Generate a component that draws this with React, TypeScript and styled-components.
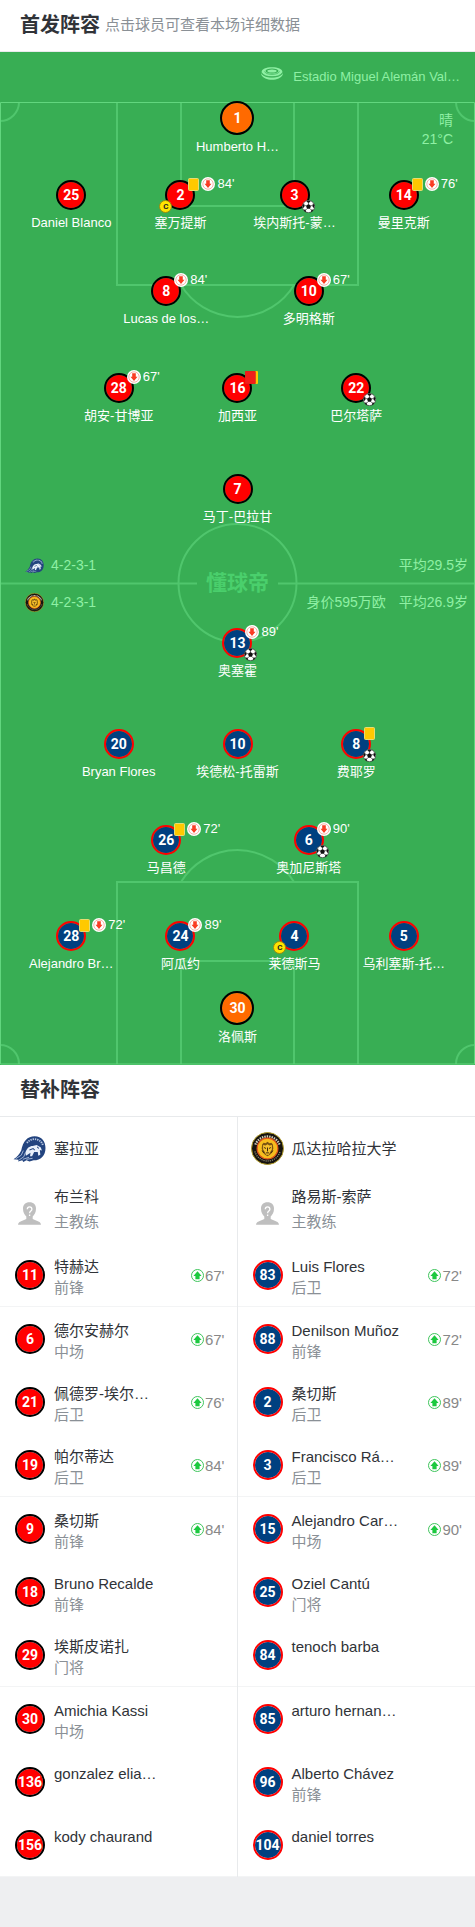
import React from 'react';
import styled, { createGlobalStyle } from 'styled-components';

const Global = createGlobalStyle`
  *, *::before, *::after { box-sizing: border-box; }
  body {
    margin: 0;
    background: #eeeff1;
    color: #303338;
    font-family: "Liberation Sans", "Noto Sans CJK SC", sans-serif;
  }
  h2, p, ul { margin: 0; padding: 0; }
  ul { list-style: none; }
  svg { flex: none; }
`;

type Side = 'home' | 'away' | 'keeper';

interface Player {
  no: number;
  name: string;
  off?: string;
  yellow?: boolean;
  red?: boolean;
  goal?: boolean;
  captain?: boolean;
}

interface Sub {
  no: number;
  name: string;
  role?: string;
  on?: string;
}

const kit: Record<Side, { fill: string; edge: string }> = {
  home: { fill: '#ff0000', edge: '#000000' },
  away: { fill: '#004080', edge: '#ff0000' },
  keeper: { fill: '#ff6a00', edge: '#000000' },
};

const homeLines: Player[][] = [
  [
    { no: 25, name: 'Daniel Blanco' },
    { no: 2, name: '塞万提斯', yellow: true, off: "84'", captain: true },
    { no: 3, name: '埃内斯托-蒙…', goal: true },
    { no: 14, name: '曼里克斯', yellow: true, off: "76'" },
  ],
  [
    { no: 8, name: 'Lucas de los…', off: "84'" },
    { no: 10, name: '多明格斯', off: "67'" },
  ],
  [
    { no: 28, name: '胡安-甘博亚', off: "67'" },
    { no: 16, name: '加西亚', red: true },
    { no: 22, name: '巴尔塔萨', goal: true },
  ],
  [{ no: 7, name: '马丁-巴拉甘' }],
];

const awayLines: Player[][] = [
  [{ no: 13, name: '奥塞霍', off: "89'", goal: true }],
  [
    { no: 20, name: 'Bryan Flores' },
    { no: 10, name: '埃德松-托雷斯' },
    { no: 8, name: '费耶罗', yellow: true, goal: true },
  ],
  [
    { no: 26, name: '马昌德', yellow: true, off: "72'" },
    { no: 6, name: '奥加尼斯塔', off: "90'", goal: true },
  ],
  [
    { no: 28, name: 'Alejandro Br…', yellow: true, off: "72'" },
    { no: 24, name: '阿瓜约', off: "89'" },
    { no: 4, name: '莱德斯马', captain: true },
    { no: 5, name: '乌利塞斯-托…' },
  ],
];

const homeSubs: Sub[] = [
  { no: 11, name: '特赫达', role: '前锋', on: "67'" },
  { no: 6, name: '德尔安赫尔', role: '中场', on: "67'" },
  { no: 21, name: '佩德罗-埃尔…', role: '后卫', on: "76'" },
  { no: 19, name: '帕尔蒂达', role: '后卫', on: "84'" },
  { no: 9, name: '桑切斯', role: '前锋', on: "84'" },
  { no: 18, name: 'Bruno Recalde', role: '前锋' },
  { no: 29, name: '埃斯皮诺扎', role: '门将' },
  { no: 30, name: 'Amichia Kassi', role: '中场' },
  { no: 136, name: 'gonzalez elia…' },
  { no: 156, name: 'kody chaurand' },
];

const awaySubs: Sub[] = [
  { no: 83, name: 'Luis Flores', role: '后卫', on: "72'" },
  { no: 88, name: 'Denilson Muñoz', role: '前锋', on: "72'" },
  { no: 2, name: '桑切斯', role: '后卫', on: "89'" },
  { no: 3, name: 'Francisco Rá…', role: '后卫', on: "89'" },
  { no: 15, name: 'Alejandro Car…', role: '中场', on: "90'" },
  { no: 25, name: 'Oziel Cantú', role: '门将' },
  { no: 84, name: 'tenoch barba' },
  { no: 85, name: 'arturo hernan…' },
  { no: 96, name: 'Alberto Chávez', role: '前锋' },
  { no: 104, name: 'daniel torres' },
];

const columns: Record<number, string> = {
  1: '30%',
  2: '30% 30%',
  3: '25% 25% 25%',
  4: '22% 24% 24% 22%',
};

/* ---------- styled parts ---------- */

const SectionHead = styled.header`
  display: flex;
  align-items: center;
  gap: 5px;
  height: 52px;
  padding: 0 20px 2px;
  background: #fff;
  border-bottom: 1px solid #e8eaec;
`;

const Title = styled.h2`
  font-size: 20px;
  line-height: 28px;
  font-weight: 700;
`;

const Hint = styled.p`
  font-size: 15px;
  line-height: 20px;
  color: #8a9096;
`;

const Field = styled.section`
  position: relative;
  background: #38ae54;
  color: #8ff0a4;
`;

const StadiumBar = styled.div`
  display: flex;
  align-items: center;
  justify-content: flex-end;
  gap: 10px;
  height: 49px;
  padding-right: 15px;
  font-size: 13px;
  line-height: 18px;
  svg { margin-bottom: 6px; }
`;

const Pitch = styled.div`
  position: relative;
  padding-bottom: 19px;
`;

const Markings = styled.svg`
  position: absolute;
  top: 0;
  left: 0;
  width: 100%;
  height: 100%;
`;

const Weather = styled.p`
  position: absolute;
  top: 10px;
  right: 22px;
  font-size: 14px;
  line-height: 19px;
  text-align: right;
`;

const Line = styled.div<{ $count: number; $gap: number }>`
  position: relative;
  display: grid;
  grid-template-columns: ${(p) => columns[p.$count]};
  justify-content: center;
  justify-items: center;
  margin-top: ${(p) => p.$gap}px;
`;

const PlayerButton = styled.button`
  display: flex;
  flex-direction: column;
  align-items: center;
  padding: 0;
  border: 0;
  background: none;
  color: #fff;
  font: inherit;
  font-size: 13px;
  line-height: 18px;
  white-space: nowrap;
  cursor: pointer;
`;

const Shirt = styled.span<{ $side: Side }>`
  position: relative;
  flex: none;
  display: flex;
  align-items: center;
  justify-content: center;
  width: ${(p) => (p.$side === 'keeper' ? 34 : 30)}px;
  height: ${(p) => (p.$side === 'keeper' ? 34 : 30)}px;
  border: 2px solid ${(p) => kit[p.$side].edge};
  border-radius: 50%;
  background: ${(p) => kit[p.$side].fill} padding-box;
  color: #fff;
  font-family: Roboto, sans-serif;
  font-size: 14px;
  line-height: 16px;
  font-weight: 700;
`;

const PlayerName = styled.span<{ $side: Side }>`
  margin-top: ${(p) => (p.$side === 'keeper' ? 3 : 4)}px;
`;

const Events = styled.span`
  position: absolute;
  top: -5px;
  left: 21px;
  display: flex;
  align-items: center;
  gap: 2px;
  width: max-content;
  height: 14px;
  font-family: "Liberation Sans", sans-serif;
  font-size: 13px;
  font-weight: 400;
`;

const GoalSpot = styled.span`
  position: absolute;
  right: -7px;
  bottom: -5px;
  display: flex;
`;

const CaptainMark = styled.span`
  position: absolute;
  left: -8px;
  bottom: -5px;
  display: flex;
  align-items: center;
  justify-content: center;
  width: 13px;
  height: 13px;
  border: 1px solid #9a8a10;
  border-radius: 50%;
  background: #ffe400;
  color: #222;
  font-size: 8px;
  line-height: 11px;
`;

const TeamInfo = styled.div<{ $side: 'home' | 'away' }>`
  position: relative;
  display: flex;
  align-items: center;
  gap: 13px;
  height: 20px;
  margin-top: ${(p) => (p.$side === 'home' ? 29 : 17)}px;
  padding: 0 7px 0 25px;
  font-size: 14px;
  line-height: 20px;
`;

const Formation = styled.span`
  display: flex;
  align-items: center;
  gap: 7px;
  margin-right: auto;
`;

const Wordmark = styled.div`
  position: absolute;
  inset: 0;
  display: flex;
  align-items: center;
  justify-content: center;
  color: #4acf6c;
  font-size: 21px;
  line-height: 28px;
  font-weight: 700;
`;

const Bench = styled.section`
  display: grid;
  grid-template-columns: 1fr 1fr;
  background: #fff;
`;

const BenchColumn = styled.div`
  min-width: 0;
  & + & { box-shadow: -1px 0 #e8eaec; }
`;

const TeamRow = styled.div`
  display: flex;
  align-items: center;
  gap: 8px;
  height: 62px;
  padding-left: 13px;
  font-size: 15px;
  line-height: 21px;
`;

const CoachRow = styled.div`
  display: flex;
  align-items: center;
  gap: 13px;
  height: 64px;
  padding: 0 0 5px 18px;
  font-size: 15px;
  line-height: 25px;
  svg { margin-top: 9px; }
`;

const SubRow = styled.li`
  display: flex;
  align-items: flex-start;
  gap: 9px;
  box-sizing: content-box;
  height: 50px;
  padding: 13px 13px 0 15px;
  font-size: 15px;
  line-height: 21px;
  &:nth-child(3n + 1) { border-bottom: 1px solid #f3f4f5; }
  ${Shirt} { margin-top: 4px; }
`;

const Who = styled.div`
  flex: 1;
  min-width: 0;
  white-space: nowrap;
`;

const Muted = styled.p`
  color: #8a9096;
`;

const Entered = styled.span`
  display: flex;
  align-items: center;
  gap: 1px;
  height: 38px;
  color: #888;
`;

/* ---------- drawings ---------- */

const PitchMarkings = () => (
  <Markings viewBox="0 0 475 964" preserveAspectRatio="none" fill="none" stroke="#50c66d" strokeWidth="2" aria-hidden="true">
    <path d="M117 1V184H358V1M181 1V105H294V1" />
    <path d="M181 184A66 66 0 0 0 294 184" />
    <path d="M117 963V781H358V963M181 963V860H294V963" />
    <path d="M181 781A66 66 0 0 1 294 781" />
    <path d="M0 482.500H197M278 482.500H475" />
    <ellipse cx="237.500" cy="482" rx="59" ry="59" />
    <path d="M19 1A19 19 0 0 1 0 20M456 1A19 19 0 0 0 475 20M19 963A19 19 0 0 0 0 944M456 963A19 19 0 0 1 475 944" />
    <path d="M.5 1.500H474.500V963H.5Z" stroke="#62d67e" strokeWidth="1" />
  </Markings>
);

const StadiumIcon = () => (
  <svg width="22" height="13" viewBox="0 0 22 13" aria-hidden="true">
    <path d="M0 5.500C1 9 5 10.500 11 10.500S21 9 22 5.500L21.600 8C20 11 16 12.800 11 12.800S2 11 .4 8Z" fill="#8ff0a4" />
    <path d="M11 .3C5 .3 .6 2.200.6 4.900S5 9.600 11 9.600 21.400 7.600 21.400 4.900 17 .3 11 .3Z" fill="#8ff0a4" />
    <ellipse cx="11" cy="4" rx="6.500" ry="2.400" fill="#38ae54" />
    <ellipse cx="11" cy="4" rx="4.600" ry="1.500" fill="#8ff0a4" />
    <path d="M.6 5.500C3 11.200 19 11.200 21.400 5.500M3.500 4.500C5 8.300 17 8.300 18.500 4.500" fill="none" stroke="#38ae54" strokeWidth=".7" />
  </svg>
);

const YellowCard = () => (
  <svg width="11" height="13" viewBox="0 0 11 13" role="img" aria-label="黄牌">
    <rect x=".5" y=".5" width="10" height="12" rx="1" fill="#ffc900" stroke="#e6dc72" />
  </svg>
);

const SecondYellow = () => (
  <svg width="13" height="13" viewBox="0 0 13 13" role="img" aria-label="两黄变红">
    <rect x="4" width="9" height="13" rx="1" fill="#ffc900" />
    <rect width="10.500" height="13" rx="1" fill="#f21d1a" stroke="#c62a1c" strokeWidth=".5" />
  </svg>
);

const OffIcon = () => (
  <svg width="14" height="14" viewBox="0 0 14 14" role="img" aria-label="换下">
    <circle cx="7" cy="7" r="7" fill="#fff" />
    <circle cx="7" cy="7" r="5.200" fill="none" stroke="#f2a093" strokeWidth=".8" />
    <path d="M5.200 3.300H8.800V6.800H10.500L7 11 3.500 6.800H5.200Z" fill="#fa3c23" />
  </svg>
);

const OnIcon = () => (
  <svg width="13" height="13" viewBox="0 0 13 13" role="img" aria-label="换上">
    <circle cx="6.500" cy="6.500" r="6" fill="#fff" stroke="#3fc45c" strokeWidth="1" />
    <path d="M4.400 10.200V6.900H2.400L6.500 2.300 10.600 6.900H8.600V10.200Z" fill="#1cc93f" />
  </svg>
);

const Ball = () => (
  <svg width="13" height="13" viewBox="0 0 26 26" role="img" aria-label="进球">
    <circle cx="13" cy="13" r="12.300" fill="#fff" stroke="#333" strokeWidth="1.400" />
    <path d="M13 8L18 11.500 16 17.300H10L8 11.500ZM13 1L17.500 3 13 5.800 8.500 3ZM24.800 10L24 16.500 20.700 12.500 21.700 7ZM1.200 10L2 16.500 5.300 12.500 4.300 7ZM17.500 24L19 19 23 19.500 20.500 23ZM8.500 24L7 19 3 19.500 5.500 23Z" fill="#111" />
    <path d="M13 8V5.500M18 11.500L21 11M16 17.300L18.500 20M10 17.300L7.500 20M8 11.500L5 11" stroke="#111" strokeWidth="1.200" />
  </svg>
);

const CelayaCrest = ({ size }: { size: number }) => (
  <svg width={size} height={size} viewBox="0 0 32 32" aria-hidden="true">
    <path d="M.5 26.500C4 24 6 22 8 18 9.500 9 14 4 21 4 28 4 31.500 9 31.500 15.500 31.500 23 27 27.500 20 27.500L16 28.500 13 27.500 10 29 9 27.500 5 28.500 5.500 27Z" fill="#23447f" />
    <path d="M13.500 10.500C16 7.300 20 6.300 23.500 7.300 26.500 8.300 28.500 10.500 29 13" fill="none" stroke="#b9c8e2" strokeWidth="1.800" strokeDasharray="1.300 .9" />
    <path d="M12 20C13.500 15.500 16 13.500 19 13.500L23 12.500 27 15 28 18 26 17.500 26.500 22 24.500 23 24 19.500 20.500 19.500 18.500 23.500 16.500 23.500 17 20 12.500 23Z" fill="#e9f0fa" />
    <path d="M2.500 26L8 22.500 10 18M6 27L10.500 24 12 20M9.500 26.500L15.500 24.500M13 26.500L19 25.500" fill="none" stroke="#a9bbd9" strokeWidth=".9" />
    <path d="M16 17.500L19.500 16 21 17.500M23.500 14.500L25 16" fill="none" stroke="#23447f" strokeWidth="1" />
  </svg>
);

const LeonesCrest = ({ size }: { size: number }) => (
  <svg width={size} height={size} viewBox="0 0 34 34" aria-hidden="true">
    <circle cx="17" cy="17" r="16.500" fill="#16130f" stroke="#b7a02a" strokeWidth="1" />
    <path d="M4.500 13A13.500 13.500 0 0 1 29.500 13" fill="none" stroke="#d8d2bd" strokeWidth="2.400" strokeDasharray="1.500 1" />
    <path d="M4 20A13.500 13.500 0 0 0 30 20" fill="none" stroke="#8d8672" strokeWidth="1.400" strokeDasharray="1.200 1" />
    <circle cx="17" cy="17" r="10.700" fill="#f6bd1e" stroke="#e4571d" strokeWidth="1.200" />
    <path d="M11.500 13L13 11 15 11.500 17 10 19 11.500 21 11 22.500 13 23 17 21.500 21.500 19.500 23.500 17 25 14.500 23.500 12.500 21.500 11 17Z" fill="#7a5312" />
    <path d="M12.500 13.500L15 14 17 12.500 19 14 21.500 13.500 21.500 18 19.500 21 18.500 23.500H15.500L14.500 21 12.500 18Z" fill="#f7c12c" />
    <path d="M13.500 16L15.500 17M20.500 16L18.500 17M17 16V20M15.500 21.500H18.500M11.500 19L13 21.500M22.500 19L21 21.500" fill="none" stroke="#3a240a" strokeWidth="1" />
  </svg>
);

const CoachIcon = () => (
  <svg width="23" height="23" viewBox="0 0 23 23" aria-hidden="true">
    <path d="M11.500.3C7.300.3 5 3 5 6.600 5 10.500 6.500 13 8.300 14.500V17L2 19.800C.8 20.400.2 21.300 0 22.700H23C22.800 21.300 22.200 20.400 21 19.800L14.700 17V14.500C16.500 13 18 10.500 18 6.600 18 3 15.700.3 11.500.3Z" fill="#bfbfbf" />
    <path d="M9.300 7.200C9.300 4.200 13.900 4.200 13.900 7.200 13.900 9 11.600 9.200 11.600 11.200M11.600 12.600V14" fill="none" stroke="#fff" strokeWidth="1.300" />
  </svg>
);

/* ---------- pieces ---------- */

const PitchPlayer = ({ player, side }: { player: Player; side: Side }) => (
  <PlayerButton type="button">
    <Shirt $side={side}>
      {player.no}
      {(player.yellow || player.red || player.off) && (
        <Events>
          {player.yellow && <YellowCard />}
          {player.red && <SecondYellow />}
          {player.off && <OffIcon />}
          {player.off}
        </Events>
      )}
      {player.goal && <GoalSpot><Ball /></GoalSpot>}
      {player.captain && <CaptainMark>C</CaptainMark>}
    </Shirt>
    <PlayerName $side={side}>{player.name}</PlayerName>
  </PlayerButton>
);

const PlayerLine = ({ players, side, gap }: { players: Player[]; side: Side; gap: number }) => (
  <Line $count={players.length} $gap={gap}>
    {players.map((p) => <PitchPlayer key={p.no} player={p} side={side} />)}
  </Line>
);

interface BenchProps {
  side: Side;
  crest: React.ReactNode;
  team: string;
  coach: string;
  subs: Sub[];
}

const BenchTeam = ({ side, crest, team, coach, subs }: BenchProps) => (
  <BenchColumn>
    <TeamRow>{crest}{team}</TeamRow>
    <CoachRow>
      <CoachIcon />
      <div>
        <p>{coach}</p>
        <Muted>主教练</Muted>
      </div>
    </CoachRow>
    <ul>
      {subs.map((s) => (
        <SubRow key={s.no}>
          <Shirt $side={side}>{s.no}</Shirt>
          <Who>
            <p>{s.name}</p>
            {s.role && <Muted>{s.role}</Muted>}
          </Who>
          {s.on && <Entered><OnIcon />{s.on}</Entered>}
        </SubRow>
      ))}
    </ul>
  </BenchColumn>
);

const homeGaps = [24, 44, 45, 49];
const awayGaps = [16, 49, 44, 44];

export default function App() {
  return (
    <main>
      <Global />
      <SectionHead>
        <Title>首发阵容</Title>
        <Hint>点击球员可查看本场详细数据</Hint>
      </SectionHead>
      <Field>
        <StadiumBar>
          <StadiumIcon />
          Estadio Miguel Alemán Val…
        </StadiumBar>
        <Pitch>
          <PitchMarkings />
          <Wordmark>懂球帝</Wordmark>
          <Weather>晴<br />21°C</Weather>
          <PlayerLine players={[{ no: 1, name: 'Humberto H…' }]} side="keeper" gap={0} />
          {homeLines.map((l, i) => <PlayerLine key={i} players={l} side="home" gap={homeGaps[i]} />)}
          <TeamInfo $side="home">
            <Formation><CelayaCrest size={19} />4-2-3-1</Formation>
            <span>平均29.5岁</span>
          </TeamInfo>
          <TeamInfo $side="away">
            <Formation><LeonesCrest size={19} />4-2-3-1</Formation>
            <span>身价595万欧</span>
            <span>平均26.9岁</span>
          </TeamInfo>
          {awayLines.map((l, i) => <PlayerLine key={i} players={l} side="away" gap={awayGaps[i]} />)}
          <PlayerLine players={[{ no: 30, name: '洛佩斯' }]} side="keeper" gap={18} />
        </Pitch>
      </Field>
      <SectionHead>
        <Title>替补阵容</Title>
      </SectionHead>
      <Bench>
        <BenchTeam side="home" crest={<CelayaCrest size={33} />} team="塞拉亚" coach="布兰科" subs={homeSubs} />
        <BenchTeam side="away" crest={<LeonesCrest size={33} />} team="瓜达拉哈拉大学" coach="路易斯-索萨" subs={awaySubs} />
      </Bench>
    </main>
  );
}
